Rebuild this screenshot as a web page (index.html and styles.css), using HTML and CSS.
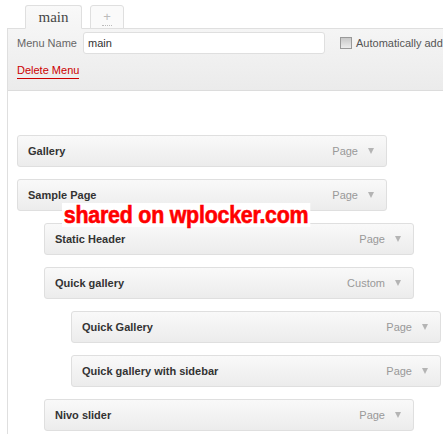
FILE: index.html
```html
<!DOCTYPE html>
<html lang="en">

<head>
  <meta charset="UTF-8">
  <title>Menus</title>
  <link rel="stylesheet" href="styles.css">
</head>

<body>
  <div class="menu-edit">
    <!-- menu tabs -->
    <div class="menu-tabs">
      <span class="menu-tab active">main</span>
      <span class="menu-tab add-tab"><span class="plus">+</span></span>
    </div>

    <div class="menu-panel">
      <!-- menu header -->
      <div class="panel-header">
        <div class="name-row">
          <label class="name-label">Menu Name</label>
          <input class="name-input" type="text" value="main">
          <label class="auto-add"><span class="checkbox"></span>Automatically add</label>
        </div>
        <a href="#" class="delete-menu">Delete Menu</a>
      </div>

      <!-- menu items -->
      <div class="panel-body">
        <ul class="menu-items">
          <li class="menu-item depth-0"><span class="item-title">Gallery</span><span class="item-type">Page</span><span class="item-arrow"></span></li>
          <li class="menu-item depth-0"><span class="item-title">Sample Page</span><span class="item-type">Page</span><span class="item-arrow"></span></li>
          <li class="menu-item depth-1"><span class="item-title">Static Header</span><span class="item-type">Page</span><span class="item-arrow"></span></li>
          <li class="menu-item depth-1"><span class="item-title">Quick gallery</span><span class="item-type">Custom</span><span class="item-arrow"></span></li>
          <li class="menu-item depth-2"><span class="item-title">Quick Gallery</span><span class="item-type">Page</span><span class="item-arrow"></span></li>
          <li class="menu-item depth-2"><span class="item-title">Quick gallery with sidebar</span><span class="item-type">Page</span><span class="item-arrow"></span></li>
          <li class="menu-item depth-1"><span class="item-title">Nivo slider</span><span class="item-type">Page</span><span class="item-arrow"></span></li>
        </ul>
      </div>
    </div>

    <div class="watermark">shared on wplocker.com</div>
  </div>
</body>

</html>
```

FILE: styles.css
```css
* {
  margin: 0;
  padding: 0;
  box-sizing: border-box;
}

body {
  font-family: Arial, "Liberation Sans", sans-serif;
  font-size: 11px;
  color: #333;
  background: #fff;
  overflow: hidden;
}

.menu-edit {
  position: relative;
  padding-top: 5px;
}

/* tabs */
.menu-tabs {
  display: flex;
  gap: 8px;
  margin-left: 25px;
  height: 24px;
  position: relative;
  z-index: 1;
}

.menu-tab {
  display: flex;
  align-items: center;
  justify-content: center;
  height: 24px;
  border: 1px solid #dfdfdf;
  border-radius: 3px 3px 0 0;
}

.menu-tab.active {
  width: 57px;
  background: linear-gradient(#f9f9f9, #f5f5f5);
  border-bottom-color: #f5f5f5;
  font-family: Georgia, "Liberation Serif", serif;
  font-size: 15px;
  color: #464646;
  padding-top: 1px;
}

.add-tab {
  width: 34px;
  background: #fafafa;
}

.plus {
  color: #bbb;
  font-size: 13px;
  line-height: 12px;
  border-bottom: 1px dotted #bbb;
  padding: 0 1px 2px;
  margin-top: 3px;
}

/* panel */
.menu-panel {
  margin-left: 7px;
  margin-right: -20px;
  margin-top: -1px;
  border-left: 1px solid #dfdfdf;
  min-height: 420px;
}

.panel-header {
  height: 63px;
  border-top: 1px solid #dfdfdf;
  border-bottom: 1px solid #dcdcdc;
  background: linear-gradient(#f5f5f5, #ebebeb);
  padding: 3px 0 0 9px;
}

.name-row {
  display: flex;
  align-items: center;
  height: 22px;
}

.name-label {
  width: 66px;
  color: #666;
}

.name-input {
  width: 242px;
  height: 22px;
  border: 1px solid #dfdfdf;
  border-radius: 3px;
  background: #fff;
  font-family: inherit;
  font-size: 11px;
  color: #333;
  padding: 0 4px;
  outline: none;
}

.auto-add {
  display: flex;
  align-items: center;
  margin-left: 15px;
  color: #555;
}

.checkbox {
  width: 12px;
  height: 12px;
  border: 1px solid #999;
  background: linear-gradient(#c8c8c8, #ececec);
  margin-right: 4px;
}

.delete-menu {
  display: inline-block;
  margin-top: 10px;
  color: #c00;
  text-decoration: none;
  border-bottom: 1px solid #c00;
  padding-bottom: 2px;
  line-height: 12px;
}

/* items */
.panel-body {
  padding: 44px 0 0 9px;
}

.menu-items {
  list-style: none;
}

.menu-item {
  display: flex;
  align-items: center;
  width: 370px;
  height: 32px;
  margin-bottom: 12px;
  padding: 0 12px 0 10px;
  border: 1px solid #dfdfdf;
  border-radius: 3px;
  background: linear-gradient(#f9f9f9, #ececec);
}

.depth-1 {
  margin-left: 27px;
}

.depth-2 {
  margin-left: 54px;
}

.item-title {
  flex: 1;
  font-weight: bold;
  color: #333;
}

.item-type {
  color: #999;
}

.item-arrow {
  width: 0;
  height: 0;
  margin-left: 10px;
  border-left: 3px solid transparent;
  border-right: 3px solid transparent;
  border-top: 6px solid #b4b4b4;
}

/* watermark over the list */
.watermark {
  position: absolute;
  left: 62px;
  top: 203px;
  padding: 0 2px;
  background: #fff;
  color: #f00;
  font-family: "Liberation Sans", Arial, sans-serif;
  font-weight: bold;
  font-size: 23px;
  line-height: 24px;
  letter-spacing: -0.25px;
  -webkit-text-stroke: 0.6px #f00;
  transform: scaleX(0.93);
  transform-origin: left center;
}
```
